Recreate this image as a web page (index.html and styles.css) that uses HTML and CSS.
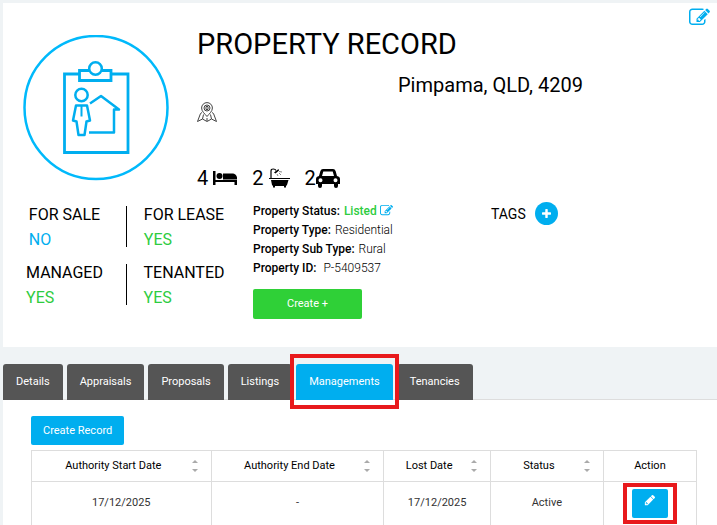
FILE: index.html
```html
<!DOCTYPE html>
<html lang="en">
<head>
<meta charset="utf-8">
<title>Property Record</title>
<link rel="stylesheet" href="styles.css">
</head>
<body>
<svg class="sprite" aria-hidden="true">
  <symbol id="edit" viewBox="0 0 1792 1792"><path d="M888 1184l116-116-152-152-116 116v56h96v96h56zm440-720q-16-16-33 1l-350 350q-17 17-1 33t33-1l350-350q17-17 1-33zm80 594v190q0 119-84.500 203.500t-203.500 84.500h-832q-119 0-203.500-84.500t-84.500-203.500v-832q0-119 84.500-203.500t203.500-84.500h832q63 0 117 25 15 7 18 23 3 17-9 29l-49 49q-14 14-32 8-23-6-45-6h-832q-66 0-113 47t-47 113v832q0 66 47 113t113 47h832q66 0 113-47t47-113v-126q0-13 9-22l64-64q15-15 35-7t20 29zm-96-738l288 288-672 672h-288v-288zm444 132l-92 92-288-288 92-92q28-28 68-28t68 28l152 152q28 28 28 68t-28 68z"/></symbol>
</svg>
<main class="page">
  <section class="card record">
    <div class="portrait">
      <svg class="badge" viewBox="0 0 146 146" fill="none" stroke="#00aeef" stroke-width="2.800" aria-hidden="true">
        <circle cx="73" cy="72.500" r="71.500" stroke="#00b9fb" stroke-width="2.500"/>
        <path d="M57 39H41.500v78.500h63.500V39H89"/>
        <path d="M66 35.500H56.500v10H88v-10h-9.500"/>
        <circle cx="72.500" cy="33.500" r="6.300" stroke-width="2.500"/>
        <g stroke-width="2.500" stroke-linejoin="round">
          <circle cx="58.500" cy="60" r="6.200"/>
          <path d="M54 70.500h10l3 15-3.500 1-2 13.500h-6l-2-13.500-3.500-1 3-15z"/>
          <path d="M58.500 70.500v11" stroke-width="2"/>
          <path d="M67 68.500l11-7.500 18 13.500h-5v23H66"/>
        </g>
      </svg>
    </div>
    <header class="heading">
      <a class="edit" href="#edit-record" aria-label="Edit record"><svg width="21" height="21" aria-hidden="true"><use href="#edit"/></svg></a>
      <h1>PROPERTY RECORD</h1>
      <p class="address">Pimpama, QLD, 4209</p>
      <svg class="map" viewBox="0 0 20 20" fill="none" stroke="#444" aria-hidden="true">
        <path d="M10 14.500C8 12 4.600 9.500 4.600 6a5.400 5.400 0 0 1 10.800 0C15.400 9.500 12 12 10 14.500z"/>
        <circle cx="10" cy="6" r="3"/><path d="M9 4.500h2v3H9z"/>
        <path d="M5 10.500L3.500 11.500.5 19.500l5-2.500 4.500 2.500 4.500-2.500 5 2.500-3-8-1.500-1M5.500 17l1-4.500M14.500 17l-1-4.500M10 16v3"/>
      </svg>
      <ul class="rooms">
        <li>4 <svg width="24" height="16" viewBox="0 0 24 16" role="img" aria-label="bedrooms"><path d="M0 1h2.500v9H24v5h-2.500v-3h-19v3H0z"/><circle cx="6.500" cy="6" r="3"/><path d="M10 3.500h9c3 0 5 2 5 4.500v1.500H10z"/></svg></li>
        <li>2 <svg width="21" height="20" viewBox="0 0 21 20" role="img" aria-label="bathrooms"><path d="M2 10V3q0-2 2.200-2T7 2.500" fill="none" stroke="#000" stroke-width="1.200"/><path d="M5 4.500L9.500 1l.5 1.500-3.500 3zM0 10h21v1H0zM2 12h17.500l-1.500 5-1 1v1.500h-2V18H6v1.500H4V18l-1-1z"/><path d="M8 6l1 2M10 5l2 2M10 3.500l3 .5" stroke="#888"/></svg></li>
        <li>2<svg width="24" height="19" viewBox="0 0 24 19" role="img" aria-label="car spaces"><path fill-rule="evenodd" d="M7 0h10q2 0 2.600 2L21 7q3 .5 3 3v5h-2v2q0 2-2 2t-2-2v-2H6v2q0 2-2 2t-2-2v-2H0v-5q0-2.500 3-3l1.400-5Q5 0 7 0zm.3 2.500L6 7h12l-1.300-4.500zM4.500 9.200a2 2 0 1 0 0 4 2 2 0 0 0 0-4zm15 0a2 2 0 1 0 0 4 2 2 0 0 0 0-4z"/></svg></li>
      </ul>
    </header>
    <div class="flags">
      <div class="flag"><p>FOR SALE<br><span class="no">NO</span></p></div>
      <div class="flag"><p>FOR LEASE<br><span class="yes">YES</span></p></div>
      <div class="flag"><p>MANAGED<br><span class="yes">YES</span></p></div>
      <div class="flag"><p>TENANTED<br><span class="yes">YES</span></p></div>
    </div>
    <div class="facts">
      <dl>
        <div><dt>Property Status:</dt><dd><span class="listed">Listed</span> <a href="#edit-status" aria-label="Edit status"><svg width="13" height="13" aria-hidden="true"><use href="#edit"/></svg></a></dd></div>
        <div><dt>Property Type:</dt><dd>Residential</dd></div>
        <div><dt>Property Sub Type:</dt><dd>Rural</dd></div>
        <div><dt>Property ID:</dt><dd>&nbsp;P-5409537</dd></div>
      </dl>
      <button class="create" type="button">Create +</button>
    </div>
    <div class="tags">
      <span>TAGS</span>
      <button type="button" aria-label="Add tag"><svg width="9" height="9" viewBox="192 128 1408 1408" aria-hidden="true"><path d="M1600 736v192q0 40-28 68t-68 28h-416v416q0 40-28 68t-68 28h-192q-40 0-68-28t-28-68v-416h-416q-40 0-68-28t-28-68v-192q0-40 28-68t68-28h416v-416q0-40 28-68t68-28h192q40 0 68 28t28 68v416h416q40 0 68 28t28 68z"/></svg></button>
    </div>
  </section>

  <nav class="tabs">
    <a href="#details">Details</a>
    <a href="#appraisals">Appraisals</a>
    <a href="#proposals">Proposals</a>
    <a href="#listings">Listings</a>
    <a class="active marked" href="#managements" aria-current="page">Managements</a>
    <a href="#tenancies">Tenancies</a>
  </nav>

  <section class="card panel">
    <button class="primary" type="button">Create Record</button>
    <table>
      <colgroup><col class="start"><col class="end"><col class="lost"><col class="status"><col class="action"></colgroup>
      <thead>
        <tr><th class="sort">Authority Start Date</th><th class="sort">Authority End Date</th><th class="sort">Lost Date</th><th class="sort">Status</th><th>Action</th></tr>
      </thead>
      <tbody>
        <tr><td>17/12/2025</td><td>-</td><td>17/12/2025</td><td>Active</td><td><button class="primary pencil marked" type="button" aria-label="Edit management"><svg width="12" height="12" viewBox="0 0 1792 1792" aria-hidden="true"><path d="M491 1536l91-91-235-235-91 91v107h128v128h107zm469-1120l416 416-832 832h-416v-416zm683 96q0 53-37 90l-166 166-416-416 166-165q36-38 90-38 53 0 91 38l235 234q37 39 37 91z"/></svg></button></td></tr>
      </tbody>
    </table>
  </section>
</main>
</body>
</html>
```
FILE: styles.css
```css
* { box-sizing: border-box; }

body {
  margin: 0;
  background: #eff3f5;
  color: #000;
  font: 11px/18px Roboto, "Liberation Sans", sans-serif;
}

h1, p, ul, dl, dd { margin: 0; padding: 0; }
ul { list-style: none; }
a { color: #00aeef; text-decoration: none; }
svg { fill: currentColor; }
.sprite { display: none; }

button {
  border: 0;
  border-radius: 2px;
  color: #fff;
  font: inherit;
  cursor: pointer;
}

.page { padding: 3px 0 0 3px; }
.card { background: #fff; }

.record {
  display: grid;
  grid-template-columns: 250px 238px 1fr;
  grid-template-rows: 199px auto;
  padding-bottom: 28px;
}

.portrait { padding: 32px 0 0 20px; }
.badge { display: block; width: 146px; height: 146px; fill: none; }

.heading {
  grid-column: 2 / -1;
  position: relative;
  margin-left: -56px;
  padding-top: 22px;
}
.heading h1 { font-size: 29px; line-height: 38px; font-weight: 400; }
.address { padding: 9px 0 0 201px; font-size: 20px; line-height: 26px; }
.edit { position: absolute; top: 4px; right: 7px; }
.edit svg { display: block; }
.map { display: block; width: 20px; height: 20px; margin-top: 4px; fill: none; stroke-width: 1; }

.rooms { display: flex; gap: 15px; margin-top: 44px; font-size: 20px; line-height: 24px; }
.rooms li { display: flex; align-items: center; gap: 5px; }
.rooms li:last-child { gap: 0; }

.flags {
  display: grid;
  grid-template-columns: 124px 114px;
  gap: 17px 0;
  align-content: start;
  padding-top: 4px;
  font-size: 16px;
  line-height: 25px;
}
.flag { display: flex; justify-content: center; height: 41px; align-items: center; }
.flag:nth-child(odd) { border-right: 1px solid #000; }
.no { color: #00aeef; }
.yes, .listed { color: #2ecc40; }

dl { font-size: 12px; }
dl div { display: flex; gap: 4px; line-height: 19px; }
dt { font-weight: 500; }
dd { font-weight: 300; }
.listed { font-weight: 500; }
dd svg { vertical-align: -2px; }
.create {
  width: 109px;
  height: 30px;
  margin-top: 11px;
  background: #2fd037;
}

.tags { display: flex; gap: 9px; align-items: center; align-self: start; font-size: 14px; }
.tags button {
  display: grid;
  place-items: center;
  width: 23px;
  height: 23px;
  padding: 0;
  border-radius: 50%;
  background: #00aeef;
}

.tabs {
  display: flex;
  gap: 4px;
  margin-top: 17px;
  border-bottom: 1px solid #ddd;
}
.tabs a {
  margin-bottom: -1px;
  padding: 9px 13px;
  border-radius: 3px 3px 0 0;
  background: #555;
  color: #fff;
}
.tabs .active { background: #00aeef; }

/* Red highlight frame around a control */
.marked { position: relative; }
.marked::after {
  content: "";
  position: absolute;
  inset: -10px -6px -9px;
  border: 4px solid #e8191c;
  z-index: 1;
}

.panel { padding: 16px 20px 0 28px; }
.primary { height: 29px; padding: 0 12px; background: #00aeef; }

table {
  width: 100%;
  margin-top: 5px;
  border-collapse: collapse;
  table-layout: fixed;
  text-align: center;
}
.start { width: 27%; }
.end { width: 26%; }
.lost { width: 16%; }
.status { width: 17%; }
.action { width: 14%; }
th, td { padding: 0; border: 1px solid #ddd; }
th { height: 31px; font-weight: 400; }
td { height: 43px; border-bottom: 0; color: #333; }

.sort { position: relative; padding-right: 16px; }
.sort::before, .sort::after {
  content: "";
  position: absolute;
  right: 13px;
  border: 3px solid transparent;
}
.sort::before { top: 6px; border-bottom-color: #aaa; }
.sort::after { bottom: 6px; border-top-color: #aaa; }

.pencil { width: 36px; padding: 0; vertical-align: middle; }
.pencil::after { inset: -6px -9px; }
```
